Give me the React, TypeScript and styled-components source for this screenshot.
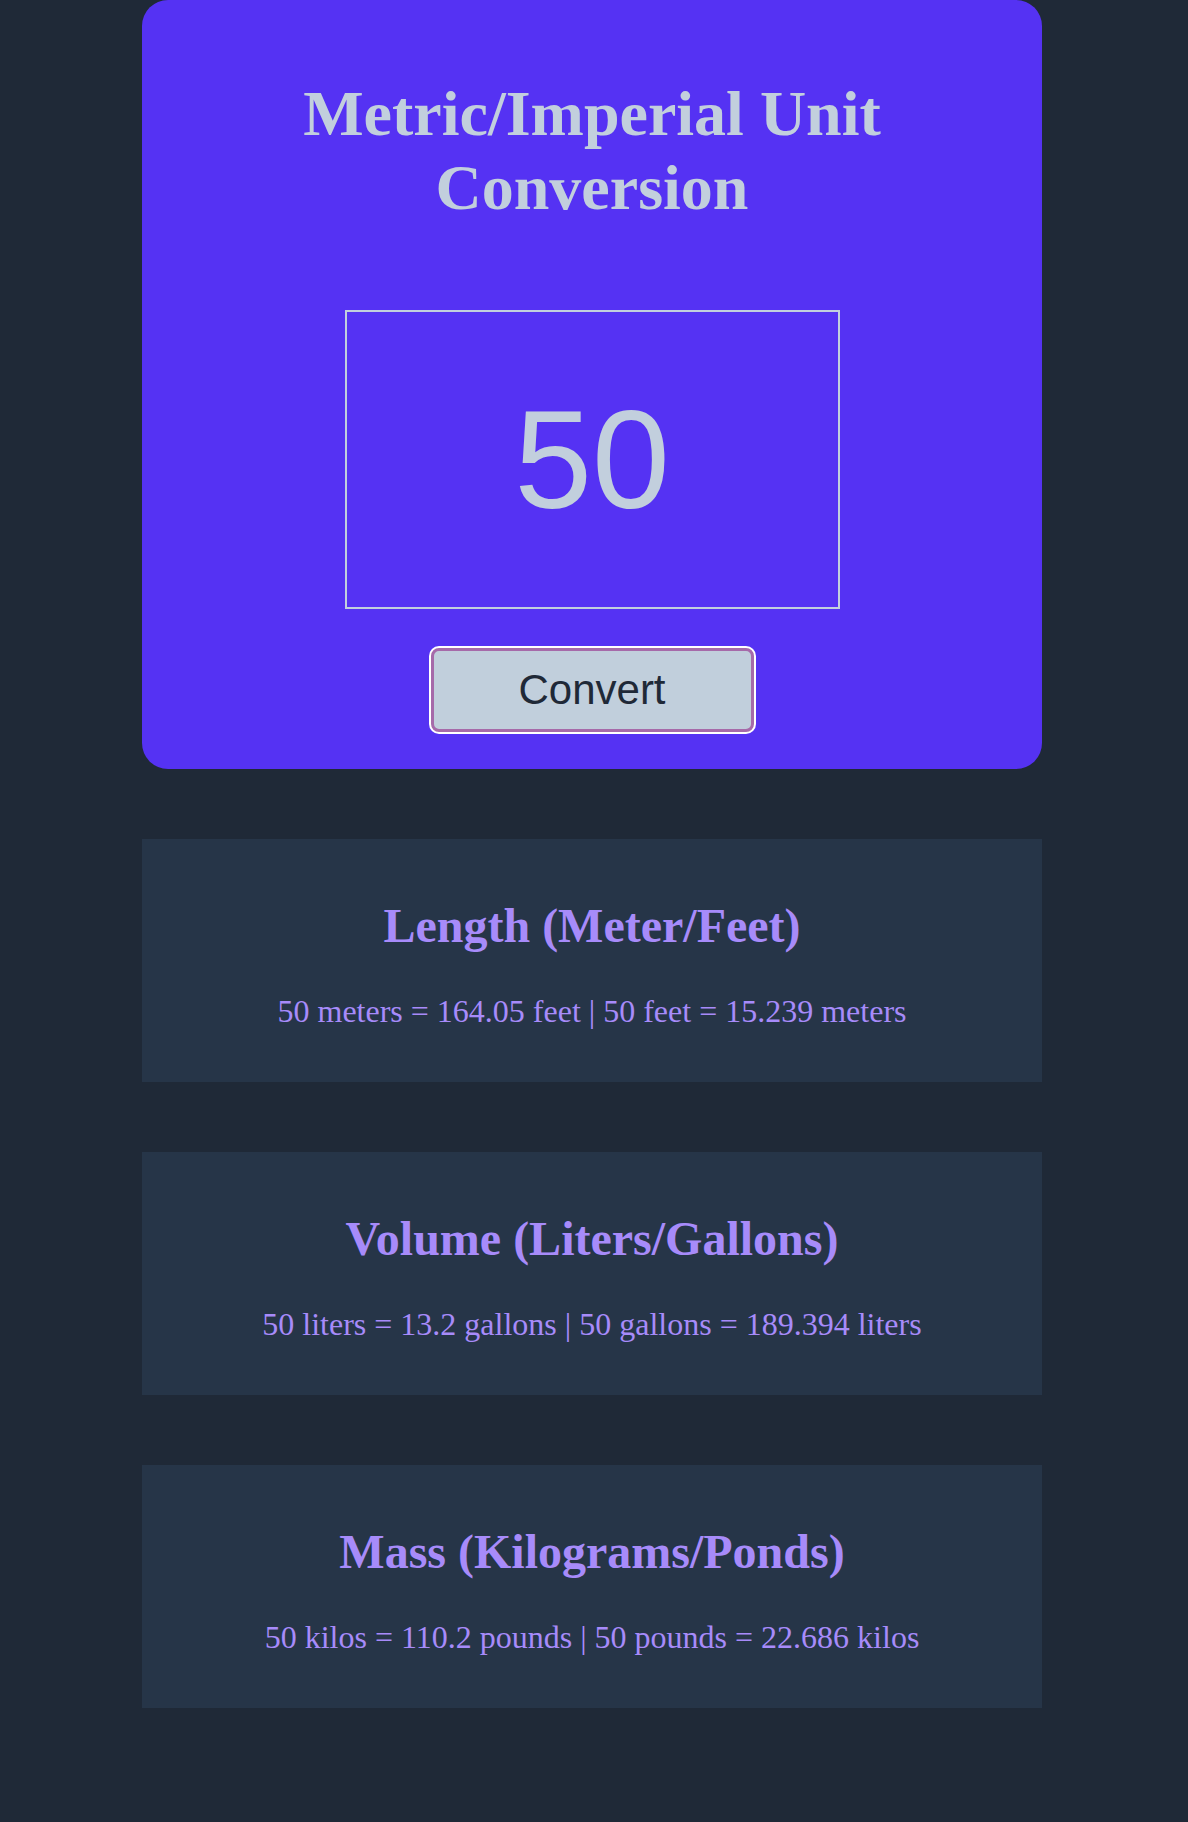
import styled, { createGlobalStyle } from 'styled-components';
import { useState } from 'react';

const GlobalStyle = createGlobalStyle`
    html, body {
        margin: 0;
        padding: 0;
        background-color: #1f2937;
    }
    body {
        font-family: "Liberation Serif", "Times New Roman", serif;
        min-height: 1822px;
    }
`;

const Page = styled.main`
    width: 900px;
    margin: 0 auto 0 calc(50% - 452px);
    display: flex;
    flex-direction: column;
    gap: 70px;
`;

const CardStyled = styled.section`
    background-color: #5532f3;
    border-radius: 26px;
    padding: 77px 0 37px;
    display: flex;
    flex-direction: column;
    align-items: center;
`;

const Title = styled.h1`
    margin: 0;
    width: 600px;
    font-size: 64px;
    line-height: 74px;
    font-weight: bold;
    text-align: center;
    color: #c2cfdd;
`;

const NumberInput = styled.input`
    box-sizing: border-box;
    width: 495px;
    height: 299px;
    margin-top: 85px;
    border: 2px solid #c2cfdd;
    background: transparent;
    color: #c2cfdd;
    font-family: "Liberation Sans", Arial, sans-serif;
    font-size: 140px;
    text-align: center;
    outline: none;
    padding: 0;
`;

const ConvertButton = styled.button`
    box-sizing: border-box;
    width: 323px;
    height: 84px;
    margin-top: 39px;
    background-color: #c1cfdc;
    color: #1f2937;
    border: 3px solid #a66aa9;
    border-radius: 8px;
    box-shadow: 0 0 0 2px #ffffff;
    font-family: "Liberation Sans", Arial, sans-serif;
    font-size: 42px;
    cursor: pointer;
`;

const Panel = styled.section`
    background-color: #263548;
    padding: 59px 0 52px;
    text-align: center;
    color: #a78bfa;
`;

const PanelTitle = styled.h2`
    margin: 0 0 40px;
    font-size: 48px;
    line-height: 55px;
    font-weight: bold;
`;

const PanelText = styled.p`
    margin: 0;
    font-size: 32px;
    line-height: 37px;
`;

const round = (n: number, d: number) => Number(n.toFixed(d));

export default function App() {
    const [value, setValue] = useState('50');
    const [num, setNum] = useState(50);

    const rows = [
        {
            title: 'Length (Meter/Feet)',
            text: `${num} meters = ${round(num * 3.281, 3)} feet | ${num} feet = ${round(num / 3.281, 3)} meters`,
        },
        {
            title: 'Volume (Liters/Gallons)',
            text: `${num} liters = ${round(num * 0.264, 3)} gallons | ${num} gallons = ${round(num / 0.264, 3)} liters`,
        },
        {
            title: 'Mass (Kilograms/Ponds)',
            text: `${num} kilos = ${round(num * 2.204, 3)} pounds | ${num} pounds = ${round(num / 2.204, 3)} kilos`,
        },
    ];

    return (
        <>
            <GlobalStyle />
            <Page>
                <CardStyled>
                    <Title>Metric/Imperial Unit Conversion</Title>
                    <NumberInput
                        type="text"
                        value={value}
                        onChange={(e) => setValue(e.target.value)}
                    />
                    <ConvertButton onClick={() => setNum(Number(value) || 0)}>
                        Convert
                    </ConvertButton>
                </CardStyled>
                {rows.map((row) => (
                    <Panel key={row.title}>
                        <PanelTitle>{row.title}</PanelTitle>
                        <PanelText>{row.text}</PanelText>
                    </Panel>
                ))}
            </Page>
        </>
    );
}
